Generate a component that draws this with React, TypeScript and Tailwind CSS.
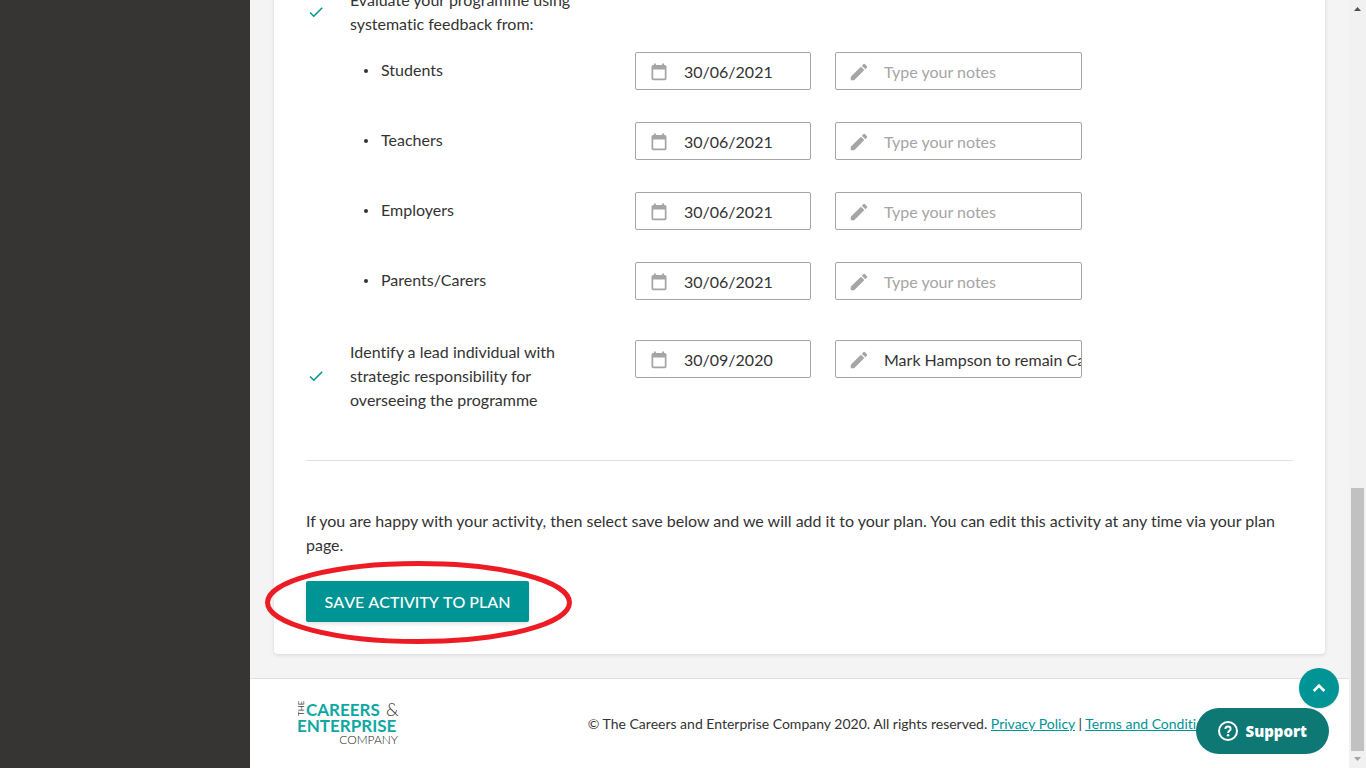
import { MdCheck, MdEdit } from "react-icons/md";

type Entry = { id: string; label: string; date: string; notes?: string };

const audiences: Entry[] = [
  { id: "students", label: "Students", date: "30/06/2021" },
  { id: "teachers", label: "Teachers", date: "30/06/2021" },
  { id: "employers", label: "Employers", date: "30/06/2021" },
  { id: "parents", label: "Parents/Carers", date: "30/06/2021" },
];

const rowGrid = "grid grid-cols-[20px_261px_176px_247px] gap-x-6";

function CalendarIcon() {
  return (
    <svg width="18" height="18" viewBox="0 0 24 24" fill="currentColor" className="mt-0.5 shrink-0" aria-hidden="true">
      <path d="M19.5 2.5h-.7V.5h-2.6v2H7.8v-2H5.2v2h-.7C3 2.5 2 3.500 2 4.800v15.900C2 22 3 23 4.500 23h15c1.500 0 2.500-1 2.500-2.300V4.800c0-1.300-1-2.300-2.500-2.300zm.2 18.200H4.300V8.600h15.400v12.100z" />
    </svg>
  );
}

function Fields({ id, label, date, notes }: Entry) {
  return (
    <>
      <div className="flex h-[38px] items-center rounded-xs border border-[#a5a5a5] bg-white pl-3.5 text-[#a5a5a5]">
        <CalendarIcon />
        <input
          id={`${id}-date`}
          aria-label={`${label} date`}
          defaultValue={date}
          className="h-full min-w-0 flex-1 pl-4 text-[#333] outline-none"
        />
      </div>
      <div className="flex h-[38px] items-center rounded-xs border border-[#a5a5a5] bg-white pl-3 text-[#a5a5a5]">
        <MdEdit size={22} className="mt-0.5 shrink-0" aria-hidden />
        <input
          id={`${id}-notes`}
          aria-label={`${label} notes`}
          defaultValue={notes}
          placeholder="Type your notes"
          className="h-full min-w-0 flex-1 pl-3.5 text-[#333] outline-none placeholder:text-[#a5a5a5]"
        />
      </div>
    </>
  );
}

function Logo() {
  return (
    <svg width="104" height="48" viewBox="0 0 104 48" role="img" aria-label="The Careers & Enterprise Company" className="font-['Lato',sans-serif]">
      <text transform="translate(6 16) rotate(-90)" fontSize="8" fill="#444">THE</text>
      <text x="8" y="16" fontSize="17" fontWeight="700" fill="#0fa7a3">CAREERS</text>
      <text x="88" y="16" fontSize="18" fontWeight="300" fill="#333">&amp;</text>
      <text x="-1" y="32" fontSize="17" fontWeight="700" fill="#0fa7a3">ENTERPRISE</text>
      <text x="100" y="44" fontSize="12" fontWeight="300" textAnchor="end" fill="#222">COMPANY</text>
    </svg>
  );
}

function HelpIcon() {
  return (
    <svg width="20" height="20" viewBox="0 0 20 20" fill="none" stroke="currentColor" strokeWidth="2" aria-hidden="true">
      <circle cx="10" cy="10" r="9" />
      <path d="M7.4 8c0-1.5 1.1-2.5 2.6-2.5s2.6 1 2.6 2.4c0 1.9-2.5 2-2.5 4.1" />
      <circle cx="10.1" cy="14.3" r="1.2" fill="currentColor" stroke="none" />
    </svg>
  );
}

export default function App() {
  return (
    <div className="relative flex h-screen overflow-hidden bg-[#f4f4f4] font-['Lato',sans-serif] text-base text-[#333]">
      <aside className="w-[250px] shrink-0 bg-[#363533]" />

      <div className="flex min-w-0 flex-1 flex-col [font-variant-ligatures:none]">
        <main className="px-6 pb-6">
          <section className="rounded-b-sm bg-white px-8 pb-8 shadow-[0_1px_4px_rgba(0,0,0,0.12)]">
            <div className={`${rowGrid} -mt-3 items-center`}>
              <MdCheck size={18} className="justify-self-center text-[#009494]" aria-hidden />
              <p className="pr-6">Evaluate your programme using systematic feedback from:</p>
            </div>

            <ul className="mt-4 flex flex-col gap-8">
              {audiences.map((entry) => (
                <li key={entry.id} className={rowGrid}>
                  <label htmlFor={`${entry.id}-date`} className="col-start-2 flex h-9 items-center pl-3.5">
                    <span className="mt-0.5 mr-[13px] size-1 rounded-full bg-[#333]" />
                    {entry.label}
                  </label>
                  <Fields {...entry} />
                </li>
              ))}
            </ul>

            <div className={`${rowGrid} mt-10`}>
              <MdCheck size={18} className="self-center justify-self-center text-[#009494]" aria-hidden />
              <label htmlFor="lead-date" className="pr-6">
                Identify a lead individual with strategic responsibility for overseeing the programme
              </label>
              <Fields id="lead" label="Lead individual" date="30/09/2020" notes="Mark Hampson to remain Careers Leader" />
            </div>

            <hr className="my-12 border-[#dee2e2]" />

            <p>
              If you are happy with your activity, then select save below and we will add it to your plan. You can edit
              this activity at any time via your plan page.
            </p>
            <div className="relative mt-6 w-fit">
              <button
                type="button"
                className="block h-[41px] min-w-[223px] rounded-xs bg-[#009494] px-4 font-medium uppercase text-white shadow-[0_2px_4px_rgba(0,0,0,0.12)] [font-kerning:none]"
              >
                Save activity to plan
              </button>
              <svg
                width="308"
                height="84"
                viewBox="0 0 308 84"
                className="pointer-events-none absolute -top-5 -left-[41px] max-w-none"
                aria-hidden="true"
              >
                <ellipse cx="153.5" cy="41.5" rx="151" ry="39" fill="none" stroke="#ed1c24" strokeWidth="5" />
              </svg>
            </div>
          </section>
        </main>

        <footer className="flex flex-1 items-center border-t border-[#dee0e4] bg-white pl-12">
          <Logo />
          <p className="ml-auto shrink-0 whitespace-nowrap pr-[131px] text-sm">
            © The Careers and Enterprise Company 2020. All rights reserved.{" "}
            <a href="#privacy" className="text-[#009494] underline">Privacy Policy</a> |{" "}
            <a href="#terms" className="text-[#009494] underline">Terms and Conditions</a>
          </p>
        </footer>
      </div>

      <div className="flex w-[17px] shrink-0 flex-col items-center justify-between bg-[#f1f1f1] py-[7px]" aria-hidden="true">
        <svg width="7" height="4" viewBox="0 0 7 4"><path d="M0 4 3.5 0 7 4z" fill="#505050" /></svg>
        <div className="mt-auto mb-1.5 h-[263px] w-[13px] bg-[#c1c1c1]" />
        <svg width="7" height="4" viewBox="0 0 7 4"><path d="M0 0h7L3.5 4z" fill="#a3a3a3" /></svg>
      </div>

      <button
        type="button"
        aria-label="Back to top"
        className="absolute right-[27px] bottom-[60px] flex size-10 items-center justify-center rounded-full bg-[#009494] text-white shadow-sm"
      >
        <svg width="14" height="10" viewBox="0 0 14 10" fill="none" stroke="currentColor" strokeWidth="2.6" aria-hidden="true">
          <path d="M1.7 8 7 2.7 12.3 8" />
        </svg>
      </button>
      <button
        type="button"
        className="absolute right-[37px] bottom-3.5 flex h-[46px] items-center gap-2 rounded-full bg-[#0d7874] px-[22px] font-['Noto_Sans',sans-serif] text-[15px] font-black text-white"
      >
        <HelpIcon />
        Support
      </button>
    </div>
  );
}
